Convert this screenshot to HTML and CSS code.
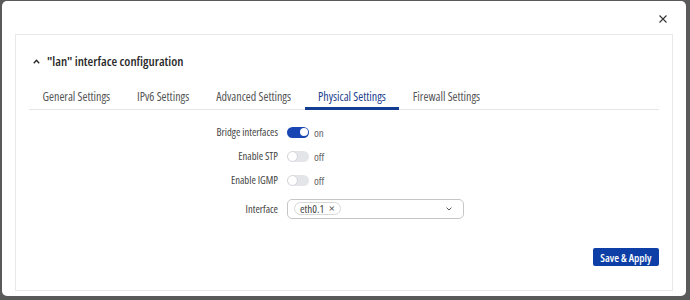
FILE: index.html
```html
<!DOCTYPE html>
<html lang="en">
<head>
<meta charset="utf-8">
<title>"lan" interface configuration</title>
<link rel="stylesheet" href="styles.css">
</head>
<body>
<div class="modal">
  <div class="modal-head">
    <button class="close" aria-label="Close">
      <svg width="8" height="8" viewBox="0 0 8 8"><path d="M0.5 0.5 7.5 7.5 M7.5 0.5 0.5 7.5" stroke="#333" stroke-width="1.1" fill="none"/></svg>
    </button>
  </div>
  <section class="card">
    <div class="card-title">
      <svg class="chev" width="7" height="5" viewBox="0 0 7 5"><path d="M0.8 4.2 3.5 1.2 6.2 4.2" stroke="#222" stroke-width="1.3" fill="none"/></svg>
      <h2>"lan" interface configuration</h2>
    </div>
    <nav class="tabs">
      <span class="tab">General Settings</span>
      <span class="tab">IPv6 Settings</span>
      <span class="tab">Advanced Settings</span>
      <span class="tab active">Physical Settings</span>
      <span class="tab">Firewall Settings</span>
    </nav>
    <div class="form">
      <div class="row">
        <label class="lbl">Bridge interfaces</label>
        <div class="ctl"><span class="switch on"><span class="knob"></span></span><span class="state">on</span></div>
      </div>
      <div class="row">
        <label class="lbl">Enable STP</label>
        <div class="ctl"><span class="switch"><span class="knob"></span></span><span class="state">off</span></div>
      </div>
      <div class="row">
        <label class="lbl">Enable IGMP</label>
        <div class="ctl"><span class="switch"><span class="knob"></span></span><span class="state">off</span></div>
      </div>
      <div class="row row-select">
        <label class="lbl">Interface</label>
        <div class="ctl">
          <div class="select">
            <span class="chip">eth0.1<span class="x">×</span></span>
            <svg class="caret" width="6" height="4" viewBox="0 0 6 4"><path d="M0.6 0.6 3 3 5.4 0.6" stroke="#555" stroke-width="1" fill="none"/></svg>
          </div>
        </div>
      </div>
    </div>
    <div class="actions">
      <button class="btn">Save &amp; Apply</button>
    </div>
  </section>
</div>
</body>
</html>
```
FILE: styles.css
```css
html, body {
  margin: 0;
  height: 300px;
}
body {
  background: #5a5a5a;
  padding: 1px 4px 4px 2px;
  box-sizing: border-box;
  font-family: "Open Sans", "Noto Sans", sans-serif;
  font-stretch: 80%;
  color: #3a3a3a;
}
.modal {
  background: #fff;
  border-radius: 5px;
  height: 295px;
  box-sizing: border-box;
  padding: 0 13px;
  display: flex;
  flex-direction: column;
}
.modal-head {
  height: 33px;
  display: flex;
  justify-content: flex-end;
  align-items: center;
  padding-top: 2px;
  box-sizing: border-box;
}
.close {
  border: 0;
  background: none;
  padding: 0;
  margin-right: 6px;
  width: 8px;
  height: 8px;
  display: flex;
}
.card {
  border: 1px solid #e8e8e8;
  height: 257px;
  box-sizing: border-box;
  padding: 0 13px;
  display: flex;
  flex-direction: column;
}
.card-title {
  margin-top: 17px;
  height: 18px;
  display: flex;
  align-items: center;
  padding-left: 4px;
  gap: 7px;
}
.card-title h2 {
  margin: 0;
  font-size: 13px;
  font-weight: 600;
  line-height: 18px;
  color: #2a2a2a;
}
.tabs {
  margin-top: 14px;
  display: flex;
  border-bottom: 1px solid #e6e6e6;
}
.tab {
  font-size: 12px;
  line-height: 16px;
  padding: 5px 13.5px 2px;
  border-bottom: 3px solid transparent;
  margin-bottom: -1px;
  color: #555;
}
.tab.active {
  color: #1d3f8f;
  border-bottom-color: #123d92;
}
.form {
  padding-top: 10px;
  display: flex;
  flex-direction: column;
}
.row {
  display: grid;
  grid-template-columns: 249px 1fr;
  column-gap: 9px;
  align-items: center;
  height: 24px;
}
.row.row-select {
  height: 33px;
}
.lbl {
  text-align: right;
  font-size: 10.6px;
  color: #444;
}
.ctl {
  display: flex;
  align-items: center;
  gap: 5px;
}
.switch {
  width: 22px;
  height: 11px;
  border-radius: 6px;
  background: #e3e5e9;
  display: flex;
  align-items: center;
  padding: 0 1px;
  box-sizing: border-box;
}
.knob {
  width: 9px;
  height: 9px;
  border-radius: 50%;
  background: #fff;
  box-shadow: 0 0 0 0.6px #c9cbd0;
}
.switch.on {
  background: #1a46b3;
  justify-content: flex-end;
  padding: 0 1.5px;
}
.switch.on .knob {
  width: 8px;
  height: 8px;
  box-shadow: none;
}
.state {
  font-size: 11px;
  color: #666;
}
.select {
  width: 177px;
  height: 20px;
  box-sizing: border-box;
  border: 1px solid #c6c6c6;
  border-radius: 5px;
  display: flex;
  align-items: center;
  justify-content: space-between;
  padding: 0 11px 0 6px;
}
.chip {
  height: 13px;
  box-sizing: border-box;
  border: 1px solid #d8d8d8;
  border-radius: 7px;
  padding: 0 5px 0 5px;
  font-size: 11px;
  line-height: 11px;
  color: #444;
  display: flex;
  align-items: center;
  gap: 5px;
}
.chip .x {
  font-size: 13px;
  color: #555;
}
.actions {
  margin-top: 23px;
  display: flex;
  justify-content: flex-end;
}
.btn {
  height: 18px;
  padding: 0 7.5px;
  border: 0;
  border-radius: 2px;
  background: #0d3fa6;
  color: #fff;
  font-family: inherit;
  font-stretch: 80%;
  font-size: 11px;
  font-weight: 600;
  white-space: nowrap;
}
```
